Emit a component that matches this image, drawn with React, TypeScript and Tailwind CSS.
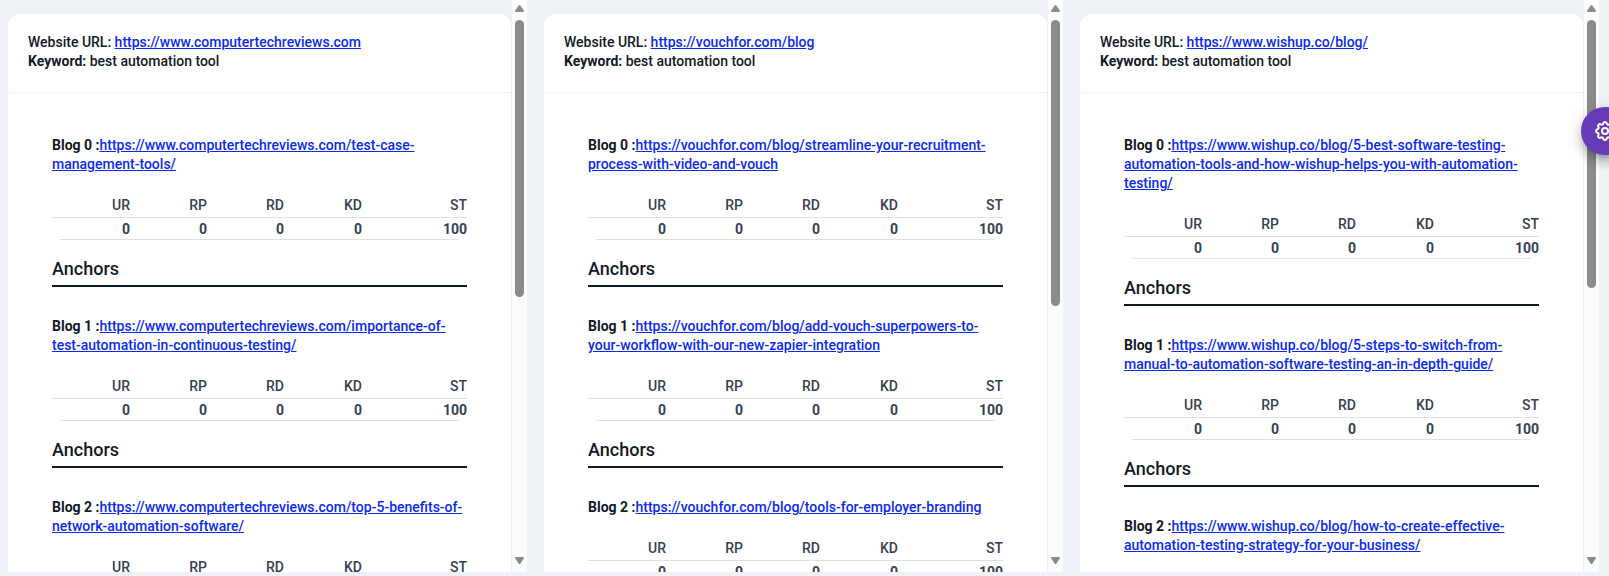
import React from "react";

type Blog = {
    url: string;
    ur: number;
    rp: number;
    rd: number;
    kd: number;
    st: number;
};

type Site = {
    url: string;
    keyword: string;
    thumb: string;
    blogs: Blog[];
};

const makeBlog = (url: string): Blog => ({ url, ur: 0, rp: 0, rd: 0, kd: 0, st: 100 });

const sites: Site[] = [
    {
        url: "https://www.computertechreviews.com",
        keyword: "best automation tool",
        thumb: "h-[277px]",
        blogs: [
            makeBlog("https://www.computertechreviews.com/test-case-management-tools/"),
            makeBlog("https://www.computertechreviews.com/importance-of-test-automation-in-continuous-testing/"),
            makeBlog("https://www.computertechreviews.com/top-5-benefits-of-network-automation-software/"),
        ],
    },
    {
        url: "https://vouchfor.com/blog",
        keyword: "best automation tool",
        thumb: "h-[286px]",
        blogs: [
            makeBlog("https://vouchfor.com/blog/streamline-your-recruitment-process-with-video-and-vouch"),
            makeBlog("https://vouchfor.com/blog/add-vouch-superpowers-to-your-workflow-with-our-new-zapier-integration"),
            makeBlog("https://vouchfor.com/blog/tools-for-employer-branding"),
        ],
    },
    {
        url: "https://www.wishup.co/blog/",
        keyword: "best automation tool",
        thumb: "h-[268px]",
        blogs: [
            makeBlog("https://www.wishup.co/blog/5-best-software-testing-automation-tools-and-how-wishup-helps-you-with-automation-testing/"),
            makeBlog("https://www.wishup.co/blog/5-steps-to-switch-from-manual-to-automation-software-testing-an-in-depth-guide/"),
            makeBlog("https://www.wishup.co/blog/how-to-create-effective-automation-testing-strategy-for-your-business/"),
        ],
    },
];

const Link: React.FC<{ href: string }> = ({ href }) => (
    <a href={href} className="text-[#0b2bee] underline">
        {href}
    </a>
);

const ScrollBar: React.FC<{ thumb: string }> = ({ thumb }) => (
    <div className="flex w-[15px] shrink-0 flex-col items-center bg-[#fcfcfc] pt-[5px] pb-2">
        <svg width="9" height="7" viewBox="0 0 9 7" fill="#8b8b8b">
            <path d="M4.5 0Q5 0 5.4.6L8.8 5.6Q9.2 7 8 7H1Q-.2 7 .2 5.6L3.6.6Q4 0 4.5 0Z" />
        </svg>
        <div className={`mt-2 w-[9px] rounded-full bg-[#8b8b8b] ${thumb}`} />
        <svg className="mt-auto" width="9" height="7" viewBox="0 0 9 7" fill="#8b8b8b">
            <path d="M4.5 7Q5 7 5.4 6.4L8.8 1.4Q9.2 0 8 0H1Q-.2 0 .2 1.4L3.6 6.4Q4 7 4.5 7Z" />
        </svg>
    </div>
);

const BlogItem: React.FC<{ blog: Blog; index: number }> = ({ blog, index }) => (
    <section className="mb-[30px]">
        <p>
            <b className="font-bold">Blog {index} :</b>
            <Link href={blog.url} />
        </p>
        <table className="mt-5 w-full table-fixed border-separate border-spacing-0 text-right text-[#364152]">
            <thead>
                <tr className="h-6">
                    <th className="w-[78px] border-b border-[#e0e0e0] font-medium">UR</th>
                    <th className="w-[77px] border-b border-[#e0e0e0] font-medium">RP</th>
                    <th className="w-[77px] border-b border-[#e0e0e0] font-medium">RD</th>
                    <th className="w-[78px] border-b border-[#e0e0e0] font-medium">KD</th>
                    <th className="border-b border-[#e0e0e0] font-medium">ST</th>
                </tr>
            </thead>
            <tbody>
                <tr className="h-[21px] align-bottom font-bold">
                    <td>{blog.ur}</td>
                    <td>{blog.rp}</td>
                    <td>{blog.rd}</td>
                    <td>{blog.kd}</td>
                    <td>{blog.st}</td>
                </tr>
            </tbody>
        </table>
        <div className="mx-2 border-b border-[#e0e0e0]" />
        <h2 className="mt-[17px] border-b-2 border-[#121926] pb-1 text-lg leading-6 font-medium">Anchors</h2>
    </section>
);

const SiteCard: React.FC<{ site: Site }> = ({ site }) => (
    <div className="flex min-w-0 overflow-hidden">
        <div className="min-w-0 flex-1 overflow-hidden border-r border-[#eef2f6] pt-[14px]">
            <article className="min-h-full rounded-t-xl bg-white">
                <header className="border-b border-[#eef2f6] px-5 pt-[19px] pb-[21px]">
                    <p>
                        Website URL: <Link href={site.url} />
                    </p>
                    <p>
                        <b className="font-bold">Keyword:</b> {site.keyword}
                    </p>
                </header>
                <div className="px-11 pt-[43px]">
                    {site.blogs.map((blog, i) => (
                        <BlogItem key={blog.url} blog={blog} index={i} />
                    ))}
                </div>
            </article>
        </div>
        <ScrollBar thumb={site.thumb} />
    </div>
);

const App: React.FC = () => {
    return (
        <main className="relative h-screen overflow-hidden bg-[#eef2f6] pr-[10px] pb-1 pl-2 font-[Roboto,sans-serif] text-sm leading-[19px] font-medium text-[#121926]">
            <div className="grid h-full grid-cols-3 grid-rows-1 gap-[17px]">
                {sites.map((site) => (
                    <SiteCard key={site.url} site={site} />
                ))}
            </div>
            {/* settings button, half hidden behind the window edge */}
            <button
                aria-label="Settings"
                className="absolute top-[107px] -right-5 flex size-12 items-center justify-center rounded-full bg-[#673ab7] text-white shadow-[0_5px_5px_-3px_rgba(0,0,0,0.2),0_8px_10px_1px_rgba(0,0,0,0.14),0_3px_14px_2px_rgba(0,0,0,0.12)]"
            >
                <svg width="24" height="24" viewBox="0 0 24 24" fill="none" stroke="currentColor" strokeWidth="2" strokeLinejoin="round">
                    <path d="M10.325 4.317c.426 -1.756 2.924 -1.756 3.35 0a1.724 1.724 0 0 0 2.573 1.066c1.543 -.94 3.31 .826 2.37 2.37a1.724 1.724 0 0 0 1.065 2.572c1.756 .426 1.756 2.924 0 3.35a1.724 1.724 0 0 0 -1.066 2.573c.94 1.543 -.826 3.31 -2.37 2.37a1.724 1.724 0 0 0 -2.572 1.065c-.426 1.756 -2.924 1.756 -3.35 0a1.724 1.724 0 0 0 -2.573 -1.066c-1.543 .94 -3.31 -.826 -2.37 -2.37a1.724 1.724 0 0 0 -1.065 -2.572c-1.756 -.426 -1.756 -2.924 0 -3.35a1.724 1.724 0 0 0 1.066 -2.573c-.94 -1.543 .826 -3.31 2.37 -2.37c1 .608 2.296 .07 2.572 -1.065z" />
                    <circle cx="12" cy="12" r="3" />
                </svg>
            </button>
        </main>
    );
};

export default App;
